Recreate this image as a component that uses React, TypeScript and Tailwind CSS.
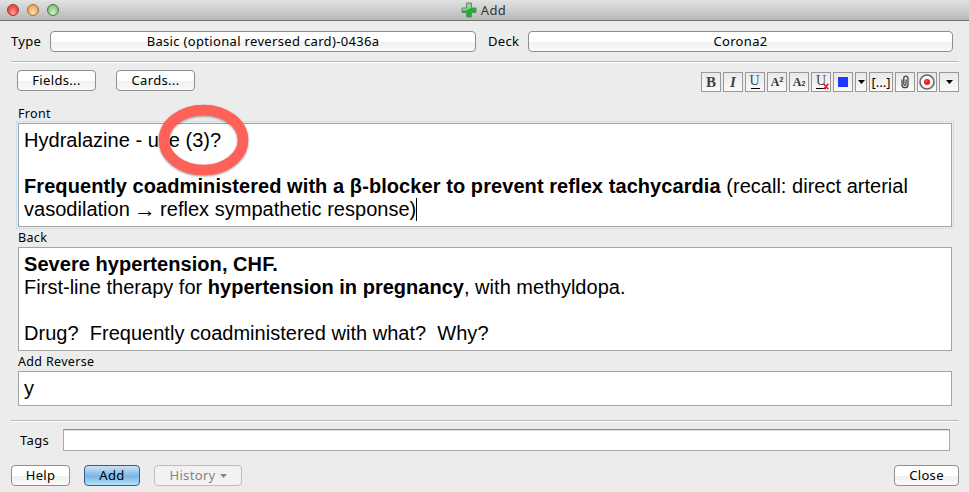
import React from "react";

const buttonBase =
  "flex h-[21px] shrink-0 items-center justify-center rounded-[4px] border text-[13px] leading-none";
const buttonLight =
  "border-[#8f8f8f] bg-linear-to-b from-white from-50% via-[#f1f1f1] via-55% to-[#fafafa] text-black";

const Separator = () => (
  <div className="ml-[11px] mr-[10px] h-[2px] shrink-0 border-b border-white bg-[#b9b9b9]" />
);

const Caret = () => (
  <svg width="7" height="4" viewBox="0 0 7 4">
    <path d="M0 0h7L3.5 4z" fill="currentColor" />
  </svg>
);

const tools = [
  {
    name: "bold",
    width: "w-5",
    icon: (
      <span className="font-['Liberation_Serif'] text-[15px] font-bold text-[#444]">
        B
      </span>
    ),
  },
  {
    name: "italic",
    width: "w-5",
    icon: (
      <span className="font-['Liberation_Serif'] text-[15px] font-bold italic text-[#444]">
        I
      </span>
    ),
  },
  {
    name: "underline",
    width: "w-5",
    icon: (
      <span className="h-[14px] w-[9px] border-b border-black text-center font-['Liberation_Serif'] text-[14px] leading-[12px] text-[#444]">
        <span className="-ml-px">U</span>
      </span>
    ),
  },
  {
    name: "superscript",
    width: "w-5",
    icon: (
      <span className="flex font-['Liberation_Serif'] text-[12px] font-bold text-[#333]">
        A
        <span className="font-['Liberation_Sans'] text-[7px]">2</span>
      </span>
    ),
  },
  {
    name: "subscript",
    width: "w-5",
    icon: (
      <span className="flex items-end font-['Liberation_Serif'] text-[12px] font-bold text-[#333]">
        A
        <span className="mb-px font-['Liberation_Sans'] text-[7px]">2</span>
      </span>
    ),
  },
  {
    name: "clear",
    width: "w-5",
    icon: (
      <span className="relative h-[14px] w-[10px] border-b border-black text-center font-['Liberation_Serif'] text-[14px] leading-[12px] text-[#444]">
        U
        <svg
          className="absolute -right-[3px] -bottom-[2px]"
          width="6"
          height="7"
          viewBox="0 0 6 7"
        >
          <path d="M.7.8l4.6 5.4M5.3.8L.7 6.2" stroke="#e81c1c" strokeWidth="1.6" />
        </svg>
      </span>
    ),
  },
  {
    name: "color",
    width: "w-5",
    icon: <span className="size-[10px] bg-[#1f38ff]" />,
  },
  { name: "color-menu", width: "w-3", icon: <Caret /> },
  {
    name: "cloze",
    width: "w-6",
    icon: <span className="text-[13px]">[...]</span>,
  },
  {
    name: "attach",
    width: "w-5",
    icon: (
      <svg width="10" height="14" viewBox="0 0 10 14" fill="none">
        <path
          d="M2 4.5v5.2a3 3 0 0 0 6 0V3.3a2.1 2.1 0 0 0-4.2 0v5.9a1.1 1.1 0 0 0 2.2 0V4.5"
          stroke="#444"
          strokeWidth="1.3"
        />
      </svg>
    ),
  },
  {
    name: "record",
    width: "w-5",
    icon: (
      <svg className="shrink-0" width="16" height="16" viewBox="0 0 16 16">
        <circle cx="8" cy="8" r="7" fill="#f8f8f8" stroke="#666" strokeWidth="1.6" />
        <circle cx="8" cy="8" r="3" fill="#e81c1c" />
        <circle cx="7.3" cy="7.2" r="1" fill="#ff6a60" />
      </svg>
    ),
  },
  { name: "more", width: "w-5", icon: <Caret /> },
];

const TitleBar = () => (
  <div className="relative flex h-[21px] shrink-0 items-center justify-center border-b border-[#69726c] bg-linear-to-b from-[#e2e2e2] to-[#b9b9b9] pr-[2px]">
    <div className="absolute left-[7px] top-[4px] flex gap-2">
      <span className="size-3 rounded-full border border-[#873d38] bg-radial-[at_50%_80%] from-[#ffaaa2] via-[#f9594f] to-[#d83b32]" />
      <span className="size-3 rounded-full border border-[#9b6a32] bg-radial-[at_50%_80%] from-[#fbe3b8] via-[#edbb78] to-[#dc9f55]" />
      <span className="size-3 rounded-full border border-[#4d7349] bg-radial-[at_50%_80%] from-[#d5f5cd] via-[#98d390] to-[#70ae69]" />
    </div>
    <svg className="mr-[4px]" width="16" height="16" viewBox="0 0 16 16">
      <path
        d="M5.5 1h5v5H15v4.500h-4.500V15h-5v-4.500H1V6h4.500z"
        fill="#1eaf38"
        stroke="#618b62"
        strokeWidth="1"
      />
      <path d="M6 1.500h4V6h-.5L5 8.500H1.500v-2H6z" fill="#91d58b" />
    </svg>
    <span className="text-[13px] leading-none text-[#333]">Add</span>
  </div>
);

const App = () => {
  return (
    <div className="flex h-[492px] w-[969px] flex-col overflow-hidden bg-[#ececec] font-['Noto_Sans',sans-serif] text-[13px] leading-none tracking-[0.33px] text-black">
      <TitleBar />

      <div className="flex h-[40px] shrink-0 items-center pl-[11px] pr-4 pt-px">
        <span className="w-[39px]">Type</span>
        <div className={`${buttonBase} ${buttonLight} w-[426px]`}>
          Basic (optional reversed card)-0436a
        </div>
        <span className="ml-3 w-10">Deck</span>
        <div className={`${buttonBase} ${buttonLight} w-[425px]`}>Corona2</div>
      </div>
      <Separator />

      <div className="flex h-[38px] shrink-0 items-start pl-[17px] pr-[10px] pt-[7px]">
        <div className={`${buttonBase} ${buttonLight} w-[79px]`}>Fields...</div>
        <div className={`${buttonBase} ${buttonLight} ml-5 w-[79px]`}>
          Cards...
        </div>
        <div className="ml-auto mt-[2px] flex gap-[2px] tracking-normal">
          {tools.map((tool) => (
            <div
              key={tool.name}
              className={`${tool.width} flex h-5 items-center justify-center border border-[#999] bg-linear-to-b from-[#e9e9e9] to-[#fafafa]`}
            >
              {tool.icon}
            </div>
          ))}
        </div>
      </div>

      <div className="flex shrink-0 flex-col pl-[18px] pr-[17px] text-[12.5px]">
        <div className="flex h-[22px] items-end pb-[3px]">Front</div>
        <div className="relative h-[104px] border border-[#a5a5a5] bg-white px-[5px] py-[5px] font-['Liberation_Sans',sans-serif] text-[20px] leading-[23px] tracking-[0.02px] outline-1 outline-offset-1 outline-dotted outline-[#b6d4ee]">
          <p>Hydralazine - use (3)?</p>
          <p>&nbsp;</p>
          <p className="whitespace-nowrap">
            <b className="tracking-[0.075px]">
              Frequently coadministered with a β-blocker to prevent reflex
              tachycardia
            </b>{" "}
            (recall: direct arterial
          </p>
          <p className="flex whitespace-pre">
            {"vasodilation "}
            <span className="-mx-[1.5px] text-[22px]">→</span>
            {" reflex sympathetic response)"}
            <span className="h-[23px] w-px bg-black" />
          </p>
          <svg
            className="absolute left-[138px] top-[-21px]"
            width="94"
            height="78"
            viewBox="0 0 94 78"
          >
            <ellipse
              cx="46.5"
              cy="37"
              rx="39.500"
              ry="30"
              fill="none"
              stroke="#ff6057"
              strokeWidth="10.500"
              className="drop-shadow-[0_1px_1px_rgba(0,0,0,0.4)]"
            />
          </svg>
        </div>
        <div className="flex h-5 items-end pb-[3px]">Back</div>
        <div className="h-[104px] border border-[#a5a5a5] bg-white p-[5px] font-['Liberation_Sans',sans-serif] text-[20px] leading-[23px] tracking-[0.02px]">
          <p>
            <b className="tracking-[0.06px]">Severe hypertension, CHF.</b>
          </p>
          <p>
            First-line therapy for <b>hypertension in pregnancy</b>, with
            methyldopa.
          </p>
          <p>&nbsp;</p>
          <p className="whitespace-pre">
            {"Drug?  Frequently coadministered with what?  Why?"}
          </p>
        </div>
        <div className="flex h-5 items-end pb-[3px]">Add Reverse</div>
        <div className="h-[35px] border border-[#a5a5a5] bg-white p-[5px] font-['Liberation_Sans',sans-serif] text-[20px] leading-[23px]">
          y
        </div>
      </div>

      <div className="h-[14px] shrink-0" />
      <Separator />

      <div className="mt-[7px] flex h-[22px] shrink-0 items-center pl-5 pr-[19px]">
        <span className="w-[43px]">Tags</span>
        <div className="h-[22px] grow border border-[#a9a9a9] border-t-[#8e8e8e] bg-white shadow-[inset_0_1px_0_#ddd]" />
      </div>

      <div className="mt-[14px] flex shrink-0 pl-[11px] pr-[10px]">
        <div className={`${buttonBase} ${buttonLight} w-[59px]`}>Help</div>
        <div
          className={`${buttonBase} ml-[14px] w-[56px] border-[#3c5d83] bg-linear-to-b from-[#c4dff5] from-5% via-[#79b5e4] via-55% to-[#b4e3fc]`}
        >
          Add
        </div>
        <div
          className={`${buttonBase} ml-[14px] w-[88px] gap-1 border-[#bdbdbd] bg-[#f2f2f2] text-[#858585]`}
        >
          History <Caret />
        </div>
        <div className={`${buttonBase} ${buttonLight} ml-auto w-[65px]`}>
          Close
        </div>
      </div>
    </div>
  );
};

export default App;
